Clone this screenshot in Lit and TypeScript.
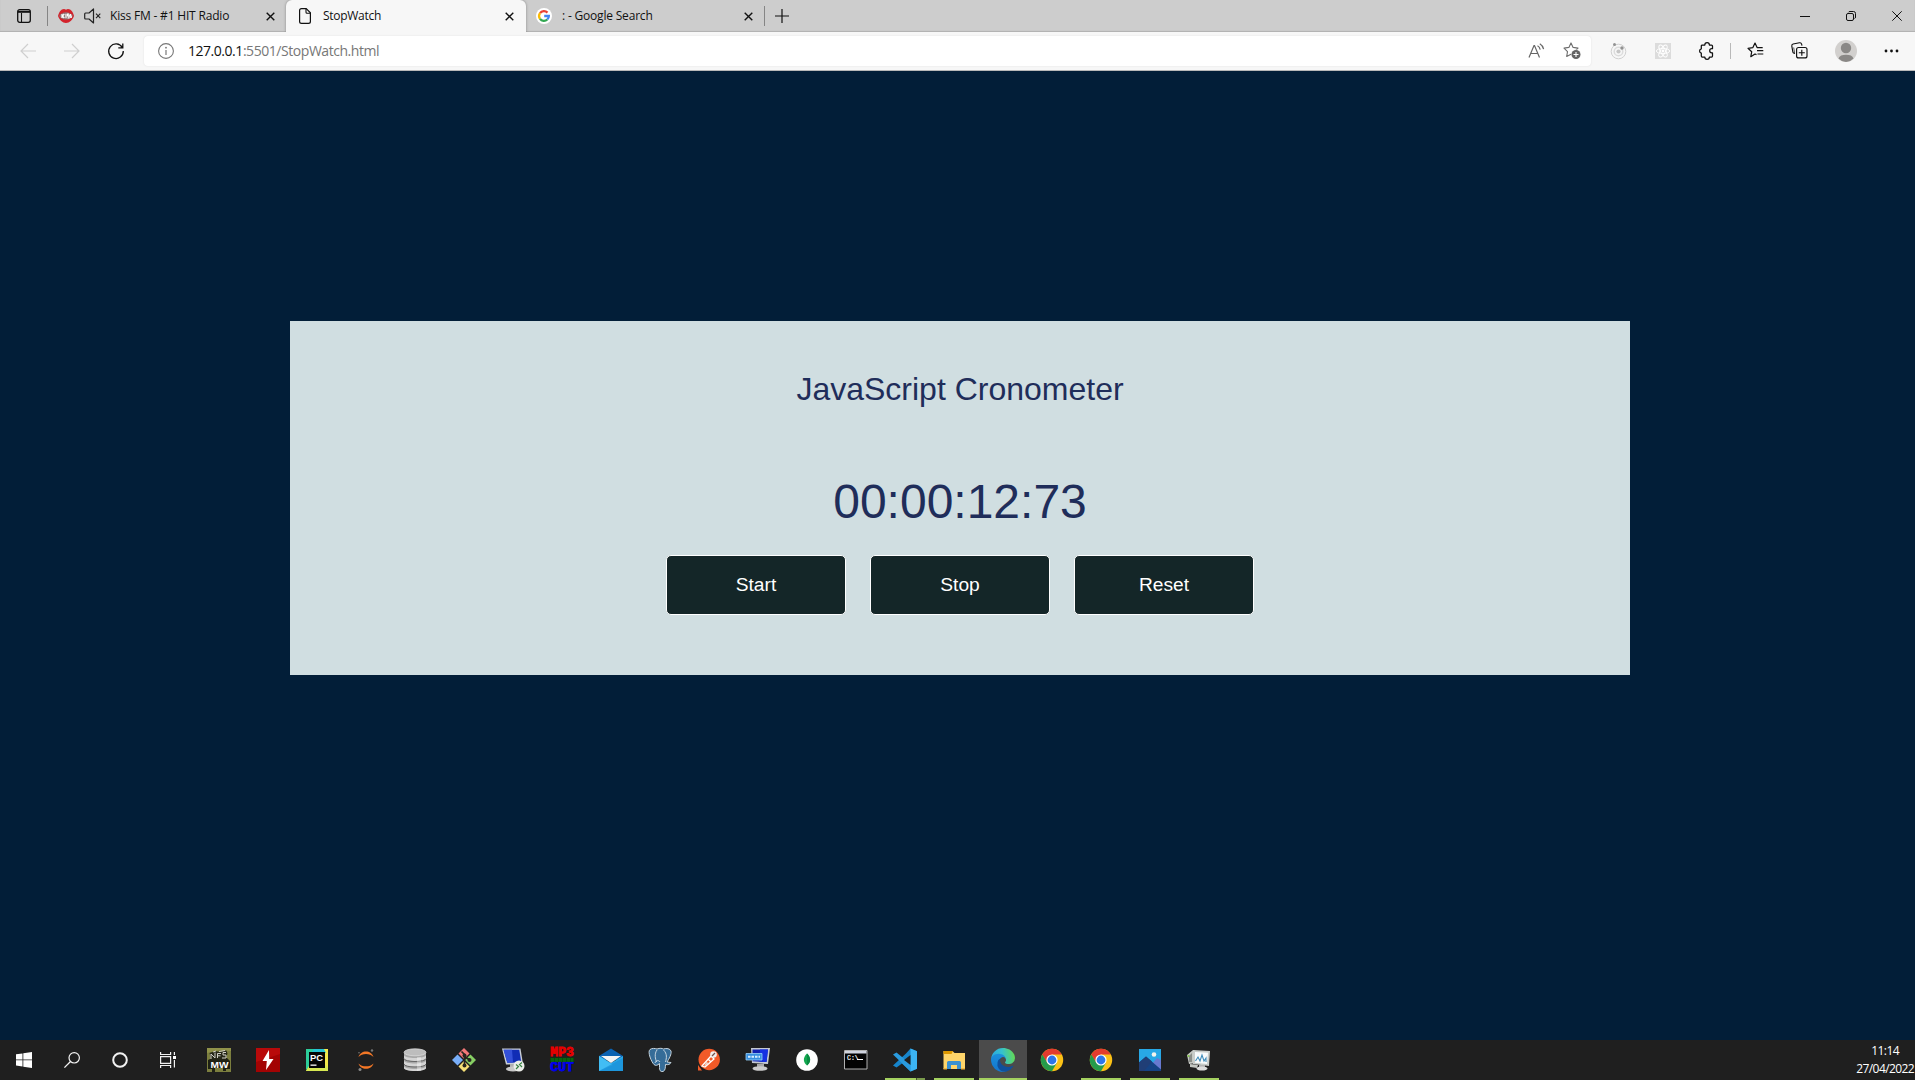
import { LitElement, html, css, svg, TemplateResult } from "lit";
import { customElement, property } from "lit/decorators.js";
import { classMap } from "lit/directives/class-map.js";

const icon = (w: number, h: number, body: TemplateResult) =>
  html`<svg width=${w} height=${h} viewBox="0 0 ${w} ${h}" fill="none" style="display:block;overflow:visible">${body}</svg>`;

const closeGlyph = icon(9, 9, svg`<path d="M.7.7l7.6 7.6M8.3.7L.7 8.3" stroke="#111" stroke-width="1.4"/>`);

const kissIcon = icon(16, 16, svg`
  <path d="M0 8C1 4 3 1 6 1q1 0 2 .8Q9 1 10 1c3 0 5 3 6 7-1.500 4-4.500 7-8 7S1.500 12 0 8z" fill="#d3222b"/>
  <path d="M1 8C3 5.500 5 4.300 8 4.300S13 5.500 15 8C13 10.600 11 11.600 8 11.600S3 10.600 1 8z" fill="#8f7376"/>
  <path d="M4 6v4M6.300 6L4.500 8l1.800 2M8 5.700v4.600M11 6.200H9.600v1.700H11V10H9.500M13.200 6.700h-1v1.300h1v1.400h-1" stroke="#fff" stroke-width="1.200"/>`);

const muteIcon = icon(17, 16, svg`
  <path d="M9.500 1v14L5 11H1.600A1 1 0 0 1 .7 10V6a1 1 0 0 1 .9-1H5z" stroke="#222" stroke-width="1.200" stroke-linejoin="round"/>
  <path d="M12 5.700l4.300 4.500M16.300 5.700L12 10.200" stroke="#222" stroke-width="1.100"/>`);

const docIcon = icon(12, 16, svg`
  <path d="M2.500.6h4.700l4.200 4.200v8.700a1.900 1.900 0 0 1-1.900 1.900h-7A1.900 1.900 0 0 1 .6 13.500v-11A1.900 1.900 0 0 1 2.500.6z" stroke="#111" stroke-width="1.200"/>
  <path d="M7 .8v3.400a1 1 0 0 0 1 1h3.300" stroke="#111" stroke-width="1.100"/>`);

const googleIcon = icon(16, 16, svg`
  <circle cx="8" cy="8" r="8" fill="#fff"/>
  <g stroke-width="2.300">
    <path d="M4 5.200A4.850 4.850 0 0 1 11.500 4.600" stroke="#ea4335"/>
    <path d="M4 10.800A4.850 4.850 0 0 1 4 5.200" stroke="#fbbc05"/>
    <path d="M11.300 11.500A4.850 4.850 0 0 1 4 10.800" stroke="#34a853"/>
    <path d="M8.200 8h4.650A4.850 4.850 0 0 1 11.300 11.500" stroke="#4285f4"/>
  </g>`);

const starPath = "M8 .9l2.100 4.500 4.900.7-3.500 3.500.8 4.900L8 12.200l-4.300 2.300.8-4.900L1 6.100l4.900-.7z";

const readAloud = icon(17, 16, svg`
  <path d="M1 14.500L6 2.500h.5l5 12M2.800 10.500h7" stroke="#666" stroke-width="1.200"/>
  <path d="M9.500 2.800q2.200 1 2.700 3.800M11.800.8q3 1.700 3.800 5.400" stroke="#666" stroke-width="1.200"/>`);

const addFavorite = icon(18, 18, svg`
  <path d=${starPath} stroke="#6d6d6d" stroke-width="1.100" stroke-linejoin="round"/>
  <circle cx="13" cy="12.500" r="5" fill="#f9f9f9"/><circle cx="13" cy="12.500" r="4.500" fill="#646464"/>
  <path d="M13 10v5M10.500 12.500h5" stroke="#fff" stroke-width="1.100"/>`);

const orbitIcon = icon(17, 18, svg`
  <circle cx="8.500" cy="9.500" r="7.300" stroke="#d0d0d0"/><circle cx="8.500" cy="9.500" r="4.300" stroke="#dcdcdc" stroke-width="1.500"/>
  <circle cx="8.500" cy="9.500" r="2.100" fill="#c6c6c6"/><circle cx="12" cy="6" r="1.700" fill="#929292"/><circle cx="4.500" cy="2.500" r="1.500" fill="#929292"/>`);

const reactIcon = icon(16, 16, svg`
  <path d="M0 0h16v16H0z" fill="#dcdcdc"/>
  <g stroke="#fff" stroke-width=".9"><ellipse cx="8" cy="8" rx="6.700" ry="2.600"/>
  <ellipse cx="8" cy="8" rx="6.700" ry="2.600" transform="rotate(60 8 8)"/>
  <ellipse cx="8" cy="8" rx="6.700" ry="2.600" transform="rotate(120 8 8)"/></g><circle cx="8" cy="8" r="1.400" fill="#fff"/>`);

const puzzleIcon = icon(16, 17, svg`
  <path transform="translate(1 0)" d="M3.300 3h2.500a2.300 2.300 0 0 1 4.600 0h2.100a1 1 0 0 1 1 1v2.700h-.7a2 2 0 0 0 0 4.200h.7V14a1 1 0 0 1-1 1h-2.100a2.300 2.300 0 0 1-4.600 0H3.300a1 1 0 0 1-1-1v-2.900a2.200 2.200 0 0 1 0-4.300V4a1 1 0 0 1 1-1z" stroke="#111" stroke-width="1.250" stroke-linejoin="round"/>`);

const favoritesIcon = icon(17, 17, svg`
  <path d="M9.500 12.600L8 12l-4.200 2.700.9-4.900L1 6.300l4.900-.7L8 1l2.100 4.600h5.600" stroke="#111" stroke-width="1.200" stroke-linejoin="round"/>
  <path d="M10 8.700h6.300M10.500 12h5.800" stroke="#111" stroke-width="1.200"/>`);

const collectionsIcon = icon(17, 17, svg`
  <path d="M4 11.500l-1-.3a1.800 1.800 0 0 1-1.200-1.600L.8 4.100A1.800 1.800 0 0 1 2.100 2L8.500.8a1.800 1.800 0 0 1 2.100 1.300l.4 1.600" stroke="#111" stroke-width="1.150"/>
  <path d="M3.600 11L2.700 5.500" stroke="#111" stroke-width=".7"/>
  <rect x="5.600" y="5.500" width="10.400" height="10.400" rx="2" stroke="#111" stroke-width="1.150"/>
  <path d="M10.800 7.700v6M7.800 10.700h6" stroke="#111" stroke-width="1.150"/>`);

const profileIcon = icon(22, 22, svg`
  <circle cx="11" cy="11" r="11" fill="#d2d0ce"/><circle cx="11" cy="8" r="5.200" fill="#8a8886"/>
  <path d="M3.500 18.500C4.500 15.500 7 14.700 11 14.700s6.500.8 7.500 3.800A11 11 0 0 1 11 22a11 11 0 0 1-7.500-3.500z" fill="#8a8886"/>`);

const chromeArt = svg`
  <circle cx="12" cy="12" r="11.200" fill="#fbc116"/>
  <path d="M12 12L2.300 6.400A11.200 11.200 0 0 1 21.700 6.400H12z" fill="#e33b2e"/>
  <path d="M2.300 6.400A11.200 11.200 0 0 0 12 23.200L16.900 14.800 12 17 7.200 14.800z" fill="#259b4a"/>
  <path d="M2.300 6.400l4.900 8.400L12 12V6.400z" fill="#e33b2e"/>
  <path d="M2.300 6.400l4.900 8.400L9 17l-6-3z" fill="#259b4a"/>
  <circle cx="12" cy="12" r="5.600" fill="#fff"/><circle cx="12" cy="12" r="4.400" fill="#2d75e8"/>`;

const edgeArt = svg`
  <defs>
    <linearGradient id="wave" x1="0" y1="120" x2="250" y2="80" gradientUnits="userSpaceOnUse"><stop offset="0" stop-color="#2aa5df"/><stop offset=".5" stop-color="#35c1cf"/><stop offset="1" stop-color="#62d957"/></linearGradient>
    <linearGradient id="body" x1="100" y1="80" x2="70" y2="240" gradientUnits="userSpaceOnUse"><stop offset="0" stop-color="#1b8edb"/><stop offset="1" stop-color="#1478cf"/></linearGradient>
  </defs>
  <g transform="scale(.09375)">
    <path d="M231 190.500c-3.400 1.800-6.900 3.400-10.500 4.700a101.500 101.500 0 0 1-35.900 6.500c-47.300 0-88.500-32.500-88.500-74.300a31.500 31.500 0 0 1 16.400-27.300c-42.800 1.800-53.800 46.400-53.800 72.500 0 73.900 68.100 81.400 82.800 81.400 7.900 0 19.800-2.300 27-4.600l1.300-.4a128.300 128.300 0 0 0 66.600-52.800 4 4 0 0 0-5.400-5.700z" fill="#10509c"/>
    <path d="M105.700 241.400a79.200 79.200 0 0 1-22.700-21.300 80.700 80.700 0 0 1 29.500-120c3.200-1.500 8.500-4.100 15.600-4a32.400 32.400 0 0 1 25.700 13 31.900 31.900 0 0 1 6.300 18.700c0-.2 24.500-79.600-80-79.600-43.900 0-80 41.700-80 78.200a130.200 130.200 0 0 0 12.100 56 128 128 0 0 0 156.400 67 75.500 75.500 0 0 1-62.800-8z" fill="url(#body)"/>
    <path d="M152.300 148.900c-.9 1-3.400 2.500-3.400 5.600 0 2.600 1.700 5.200 4.800 7.300 14.300 10 41.400 8.600 41.500 8.600a59.600 59.600 0 0 0 30.300-8.300 61.400 61.400 0 0 0 30.400-52.900c.3-22.400-8-37.300-11.300-43.900C223.500 23.900 177.700 0 128 0A128 128 0 0 0 0 126.200c.5-36.500 36.800-66 80-66 3.500 0 23.500.3 42 10.100 16.300 8.600 24.900 18.900 30.800 29.200 6.200 10.700 7.300 24.100 7.300 29.500 0 5.300-2.700 13.300-7.800 19.900z" fill="url(#wave)"/>
  </g>`;

interface App { art: TemplateResult; state?: "open" | "active" | "multi"; }

const apps: App[] = [
  { art: svg`
    <path d="M0 0h24v24H0z" fill="#7b7e3e"/><path d="M0 0h24v3L13 2 0 5z" fill="#90924a"/><path d="M1 12l4-2h15l3 3v8h-4v2h-3v-3H8v4H5v-3H1z" fill="#1f2114"/>
    <path d="M2.500 5l6-2 4 1 7-1.500 1 3-2 6H4z" fill="#26281a"/>
    <path d="M4 11V6l4 4V4.500M10.500 10V5.500h3.500M10.500 7.800h3M19 4.500h-3v2.500h3V10h-4M6 4l3-1M12 3.500l6-1" stroke="#cfcfc6" stroke-width="1"/>
    <text x="3.500" y="20" font-family="Liberation Sans, sans-serif" font-weight="700" font-size="9.500" textLength="18" lengthAdjust="spacingAndGlyphs" fill="#fff">MW</text>` },
  { art: svg`<path d="M0 0h24v24H0z" fill="#b90a0a"/><path d="M0 14l24-8v18H0z" fill="#a30303"/><path d="M13 2L6.500 13h4.300L10 22l7.500-11h-4.300z" fill="#fff"/>` },
  { art: svg`<path d="M1 1h11L9 13 1 22z" fill="#21d789"/><path d="M12 1h11l-1 8-8 2z" fill="#1bc0e8"/><path d="M19 1h4v22l-8-4z" fill="#f2e84a"/><path d="M1 1h8v20H1z" fill="#2dcd9a"/><path d="M9 1h10l2 4H6z" fill="#24c3d4"/><path d="M1 22.500l4-6 16 1 2 2v3.500H1z" fill="#d7e852"/>
    <path d="M4 4h16v16H4z" fill="#050505"/><text x="5" y="13.200" font-family="Liberation Sans, sans-serif" font-weight="700" font-size="9.500" fill="#fff" textLength="13" lengthAdjust="spacingAndGlyphs">PC</text><path d="M5.500 16.500h6v1.300h-6z" fill="#fff"/>` },
  { art: svg`<path d="M4.500 9C6.500 1.500 17.500 1.500 19.500 9 16 5 8 5 4.500 9zM4.500 15.500C6.500 22.500 17.500 22.500 19.500 15.500 16 19.300 8 19.300 4.500 15.500z" fill="#f37726"/><circle cx="18" cy="2.500" r="1.200" fill="#777"/><circle cx="6" cy="21.500" r="1.500" fill="#898989"/><circle cx="5" cy="4.700" r=".8" fill="#777"/>` },
  { art: svg`<path d="M1 4.500v15C1 24 23 24 23 19.500v-15" fill="#a8a8a8"/><path d="M1 7v3c0 4 22 4 22 0V7c0 4-22 4-22 0zM1 12.500v3c0 4 22 4 22 0v-3c0 4-22 4-22 0zM1 18v2c0 4 22 4 22 0v-2c0 4-22 4-22 0z" fill="#d4d4d4"/><path d="M1 10.500c0 4 22 4 22 0M1 16c0 4 22 4 22 0" stroke="#666"/><path d="M14 9h4v14h-4z" fill="#fff" opacity=".35"/><ellipse cx="12" cy="4.300" rx="11" ry="3.500" fill="#bdbdbd" stroke="#e0e0e0" stroke-width=".7"/>` },
  { art: svg`<path d="M12 0l5.500 5.500L12 11 6.500 5.500z" fill="#f37878"/><path d="M5.500 6.500L11 12l-5.500 5.500L0 12z" fill="#79aef8"/><path d="M18.500 6.500L24 12l-5.500 5.500L13 12z" fill="#87cf64"/><path d="M12 13l5.500 5.500L12 24l-5.500-5.500z" fill="#f6df76"/><path d="M9.500 3.500l3 3v11M13 9l5 3" stroke="#27251f" stroke-width="1.700"/><circle cx="12.500" cy="7.500" r="2" fill="#27251f"/><circle cx="12.500" cy="17.500" r="2" fill="#27251f"/><circle cx="17.500" cy="12" r="2" fill="#27251f"/>` },
  { art: svg`<path d="M1 .5l18.500 0 2.500 15.500-17 .500z" fill="#c8ced8"/><path d="M2.600 1.700h15.700l2 12.700-14 .300z" fill="#102cb5"/><path d="M2.600 1.700H11L12 14.500l-5.700.2z" fill="#3350d8"/><path d="M9 16h8v4H9z" fill="#b0b0b0"/><ellipse cx="12" cy="21" rx="7" ry="2.500" fill="#c8c8c8"/><circle cx="18" cy="18" r="5.500" fill="#eceee9"/><path d="M15 16.500l2.500 2-2.500 2.500M21 14.500l-2.500 2 2.500 2.500" stroke="#388344" stroke-width="1.200"/>` },
  { art: svg`<g font-family="Liberation Mono, monospace" font-weight="700" font-size="12"><text x=".3" y="8.300" fill="#e80000" stroke="#e80000" stroke-width=".8" textLength="23.500" lengthAdjust="spacingAndGlyphs">MP3</text><text x=".3" y="23" fill="#0000ee" stroke="#0000ee" stroke-width=".8" textLength="23.500" lengthAdjust="spacingAndGlyphs">CUT</text></g><path d="M0 9.800h24v4H0z" fill="#064f09"/><path d="M1 11h22M1 13h22" stroke="#168b1c" stroke-width=".7" stroke-dasharray="3 1"/>` },
  { art: svg`<path d="M0 8L12 .5 24 8v4H0z" fill="#0b62b2"/><path d="M0 8l12 7 12-7v15H0z" fill="#29a8e8"/><path d="M0 8l14 9-14 6z" fill="#42bdf4"/><path d="M24 10v13H0z" fill="#168bd4" opacity=".6"/><path d="M2 8h20L12 15z" fill="#f4f4f4"/>` },
  { art: svg`<path d="M2 1.500C4 0 7 .3 9 1c3-1 5-.8 6.500 0 3-1 6.500-.5 7.500 2 .8 3-2 8-4 11l4 .5c-1 2-3 2.500-5.500 2-.2 3 0 6-2.500 7-3 .5-3.500-1.500-3.500-4v-4c-2 2-4 2.500-5.500 1C3.500 14-.8 4 2 1.500z" fill="#356c98" stroke="#c5d3dd" stroke-width="1"/><path d="M9 2C6 6 7.500 11 8.500 14M15.500 2c4 4 3 8 2 12M7 15c1-3 4-3 5-1" stroke="#d5dfe6" stroke-width=".9"/>` },
  { art: svg`<circle cx="12.200" cy="11.500" r="10.700" fill="#f15a28"/><path d="M1 17v5.500h4z" fill="#f15a28"/><path d="M5 18L14 8l3 3-9 8zM11 11l3 3" stroke="#fff" stroke-width="1.300"/><circle cx="16.500" cy="6.500" r="3.300" fill="#eee"/><path d="M15 8l3-3" stroke="#775047" stroke-width="1.300"/><path d="M9 14l3 1-5 4" fill="#efd2c8"/>` },
  { art: svg`<path d="M5 0h19l-2 16-16-1z" fill="#c6cad2"/><path d="M6.500 1.500h15.500l-1.500 12.500-14-.7z" fill="#1020b0"/><path d="M14 1.500h8l-1.500 12.500-7-.500z" fill="#1531e2"/><path d="M0 5.500h16v6.500H0z" fill="#388fe0" stroke="#98cff9" stroke-width=".8"/><path d="M2 8.700h12" stroke="#d8efff" stroke-width="2" stroke-dasharray="2.500 1"/><path d="M11 16h7v4h-7z" fill="#aaa"/><ellipse cx="14" cy="20.500" rx="7.500" ry="2.300" fill="#ccc"/>` },
  { art: svg`<circle cx="12" cy="12" r="10.800" fill="#fff"/><path d="M12 5.500c4.500 4 3.800 9 0 12-3.800-3-4.500-8 0-12z" fill="#13a94f"/><path d="M12 5.500c4.500 4 3.800 9 0 12z" fill="#0a8b43"/>` },
  { art: svg`<path d="M.5 2.500h22.500v18.500H.5z" fill="#030303" stroke="#b1b1b1"/><path d="M1 3h21.500v2.500H1z" fill="#d0d4df"/><text x="3" y="12" font-family="Liberation Mono, monospace" font-size="6.500" fill="#fff" stroke="#fff" stroke-width=".2">C:\\</text><path d="M13 11.500h6" stroke="#fff"/>` },
  { art: svg`<path d="M17.500.5L24 3.200v17.600l-6.500 2.700L9 15.500l-5.500 4L0 17.500 13 5.500z" fill="#1785cb"/><path d="M0 6.500l3.500-2L17.500 16v7.500z" fill="#2a9bdf"/><path d="M17.500.5L24 3.200v17.600l-6.500 2.700z" fill="#3cb4f3"/><path d="M17.500 7L11 12l6.500 5z" fill="#1f1f1f"/><path d="M0 9.500L2.800 12 0 14.500z" fill="#1f1f1f"/>`, state: "multi" },
  { art: svg`<path d="M1.500 3h9l2 2H23v16H1.500z" fill="#ffd56a"/><path d="M1.500 3h9.500l-1.500 3h-8z" fill="#de9800"/><path d="M5 14.500a1.500 1.500 0 0 1 1.500-1.500h11a1.500 1.500 0 0 1 1.500 1.500V21h-4v-4H9v4H5z" fill="#3a91d2"/><path d="M1.500 20h3.500v1.500H1.500zM19 20h4v1.500h-4z" fill="#f3b73d"/>`, state: "open" },
  { art: edgeArt, state: "active" },
  { art: chromeArt },
  { art: chromeArt, state: "open" },
  { art: svg`<path d="M1 1h22v22H1z" fill="#28a8e6"/><path d="M23 12l-4-2-6 7 10 6z" fill="#6879cf"/><path d="M1 14.500L8 8.500l15 13V23H1z" fill="#164384"/><path d="M1 14.500L8 8.500l6 5L6 23H1z" fill="#203e76"/><circle cx="16" cy="6.500" r="2.300" fill="#f4f5ed"/>`, state: "open" },
  { art: svg`<path d="M0 7l6-5 3 1v12l-7 1zM3 16l8 1-1 3-7-1z" fill="#c5c8c3"/><path d="M2 8l3-3v9H2z" fill="#8b8f8a"/><circle cx="1.500" cy="8" r="1" fill="#80c840"/><path d="M6 2l17 1-1 15-16-2z" fill="#c9cdca"/><path d="M8 4l13 .7-1 11.300-12-1.200z" fill="#f8fbfc"/><path d="M8.500 13l2.500-4 2 4 2-6 2 6 2-3v4" stroke="#408dba" stroke-width="1.100"/><path d="M12 17h6v3h-6z" fill="#b5b5b5"/><ellipse cx="15" cy="20.500" rx="5.500" ry="2" fill="#ddd"/>`, state: "open" },
];

@customElement("browser-tab")
class BrowserTab extends LitElement {
  @property({ type: Boolean, reflect: true }) active = false;
  @property() label = "";
  @property({ attribute: false }) icons: TemplateResult[] = [];

  static styles = css`
    :host { display: flex; align-items: center; box-sizing: border-box; height: 32px; color: #111;
      font: 12px/26px "Open Sans", sans-serif; letter-spacing: -0.19px; }
    :host([active]) { background: #f7f7f7; border-radius: 6px 6px 0 0; box-shadow: 0 0 3px rgba(0,0,0,.35); clip-path: inset(0 -4px 0 -4px); letter-spacing: -0.28px; }
    .icons { display: flex; gap: 10px; }
    .label { flex: 1; white-space: nowrap; }
    .tab { display: flex; align-items: center; flex: 1; gap: var(--label-gap, 10px); padding-left: var(--lead, 10px); padding-right: var(--tail, 12px); }
  `;

  render() {
    return html`<div class="tab"><div class="icons">${this.icons}</div><span class="label">${this.label}</span>${closeGlyph}</div>`;
  }
}

@customElement("browser-chrome")
class BrowserChrome extends LitElement {
  static styles = css`
    :host { display: block; flex: none; font-family: "Open Sans", sans-serif; }
    .strip { display: flex; align-items: center; height: 32px; background: #cdcdcd; box-shadow: inset 0 -1px 1px rgba(0,0,0,.14); }
    .workspace { padding: 0 16px 0 17px; }
    .rule { width: 1px; height: 20px; background: #858585; }
    .first { width: 238px; --lead: 10px; --tail: 11px; --label-gap: 9px; }
    .second { width: 240px; --lead: 13px; --tail: 12px; --label-gap: 12px; }
    .third { width: 238px; --lead: 10px; --tail: 11px; --label-gap: 10px; }
    .plus { margin-left: 10px; }
    .controls { display: flex; align-items: center; margin-left: auto; padding-right: 13px; gap: 36px; }
    .toolbar { display: flex; align-items: center; box-sizing: border-box; height: 39px; padding: 0 16px 1px 20px; background: #f7f7f7; border-bottom: 1px solid #b9b9b9; }
    .nav { display: flex; gap: 28px; width: 124px; }
    .address { display: flex; align-items: center; box-sizing: border-box; width: 1448px; height: 30px; padding: 0 10px 0 14px; background: #fff; border-radius: 4px; box-shadow: 0 0 2px rgba(0,0,0,.1); }
    .url { flex: 1; margin-left: 14px; font-size: 14px; line-height: 28px; letter-spacing: -0.45px; color: #777; }
    .url b { font-weight: 400; color: #111; }
    .page-actions { display: flex; align-items: center; gap: 18px; }
    .extensions { display: flex; align-items: center; gap: 27.500px; margin-left: 19.500px; }
    .divider { width: 1px; height: 16px; margin: 0 16px; background: #b9b9b9; }
    .personal { display: flex; align-items: center; gap: 27px; }
  `;

  render() {
    return html`
      <div class="strip">
        <div class="workspace">${icon(14, 14, svg`<rect x=".7" y=".7" width="12.600" height="12.600" rx="2" stroke="#111" stroke-width="1.300"/><path d="M1 1.800h12v2H1z" fill="#111"/><path d="M4.500 4v9" stroke="#111" stroke-width="1.100"/>`)}</div>
        <i class="rule"></i>
        <browser-tab class="first" label="Kiss FM - #1 HIT Radio" .icons=${[kissIcon, muteIcon]}></browser-tab>
        <browser-tab class="second" active label="StopWatch" .icons=${[docIcon]}></browser-tab>
        <browser-tab class="third" label=" : - Google Search" .icons=${[googleIcon]}></browser-tab>
        <i class="rule"></i>
        <div class="plus">${icon(14, 14, svg`<path d="M7 0v14M0 7h14" stroke="#111" stroke-width="1.200"/>`)}</div>
        <div class="controls">
          ${icon(10, 10, svg`<path d="M0 5.500h10" stroke="#111"/>`)}
          ${icon(10, 10, svg`<rect x=".5" y="2.500" width="7" height="7" rx="1.500" stroke="#111"/><path d="M2.500 1.300Q2.700.5 4 .5h3.500a2 2 0 0 1 2 2V6q0 1.300-1 1.500" stroke="#111"/>`)}
          ${icon(10, 10, svg`<path d="M.3.300l9.400 9.400M9.700.300L.3 9.700" stroke="#111"/>`)}
        </div>
      </div>
      <div class="toolbar">
        <div class="nav">
          ${icon(16, 16, svg`<path d="M16 8H1M8 1L1 8l7 7" stroke="#cfcfcf" stroke-width="1.200"/>`)}
          ${icon(16, 16, svg`<path d="M0 8h15M8 1l7 7-7 7" stroke="#cfcfcf" stroke-width="1.200"/>`)}
          ${icon(16, 16, svg`<path d="M14.300 4.500A7.300 7.300 0 1 0 15.300 8M14.800.5v4.300h-4.500" stroke="#111" stroke-width="1.300"/>`)}
        </div>
        <div class="address">
          ${icon(16, 16, svg`<circle cx="8" cy="8" r="7.400" stroke="#777" stroke-width="1.100"/><path d="M8 7v5" stroke="#777" stroke-width="1.200"/><circle cx="8" cy="4.700" r=".9" fill="#777"/>`)}
          <span class="url"><b>127.0.0.1</b>:5501/StopWatch.html</span>
          <div class="page-actions">${readAloud}${addFavorite}</div>
        </div>
        <div class="extensions">${orbitIcon}${reactIcon}${puzzleIcon}</div>
        <i class="divider"></i>
        <div class="personal">
          ${favoritesIcon}${collectionsIcon}${profileIcon}
          ${icon(15, 4, svg`<circle cx="2" cy="2" r="1.400" fill="#111"/><circle cx="7.500" cy="2" r="1.400" fill="#111"/><circle cx="13" cy="2" r="1.400" fill="#111"/>`)}
        </div>
      </div>`;
  }
}

@customElement("stop-watch")
class StopWatch extends LitElement {
  @property() time = "00:00:12:73";

  static styles = css`
    :host { display: flex; flex: 1; align-items: flex-start; box-sizing: border-box; padding: 250px 0 0 290px; background: #021e38; font-family: "Liberation Sans", sans-serif; }
    .panel { display: flex; flex-direction: column; align-items: center; box-sizing: border-box; width: 1340px; height: 354px; padding-top: 50px; background: #d0dee1; color: #1f2d5a; }
    h1 { margin: 0; font-size: 32px; line-height: 36px; font-weight: 400; }
    .time { margin: 67px 0 26px; font-size: 48px; line-height: 55px; }
    .buttons { display: flex; gap: 24px; }
    button { box-sizing: border-box; width: 180px; height: 60px; padding: 0; border: 1px solid #fff; border-radius: 5px; background: #142628; color: #fff; font: 19.200px "Liberation Sans", sans-serif; }
  `;

  render() {
    return html`<section class="panel">
      <h1>JavaScript Cronometer</h1>
      <div class="time">${this.time}</div>
      <div class="buttons"><button>Start</button><button>Stop</button><button>Reset</button></div>
    </section>`;
  }
}

@customElement("task-bar")
class TaskBar extends LitElement {
  static styles = css`
    :host { display: flex; flex: none; height: 40px; background: #1f1f1f; }
    .system { display: flex; width: 195px; }
    .apps { display: flex; gap: 1px; }
    .cell { display: flex; align-items: center; justify-content: center; box-sizing: border-box; width: 48px; height: 40px; }
    .active { background: #4b4b4b; box-shadow: inset 0 -2px #a4d160; }
    .open, .multi { background: linear-gradient(#a4d160, #a4d160) 4px 38px / 40px 2px no-repeat; }
    .multi { background: linear-gradient(90deg, #a4d160 31px, #42542a 31px, #42542a 32px, #7a9b4c 32px) 4px 38px / 40px 2px no-repeat; }
    .clock { display: flex; flex-direction: column; margin-left: auto; padding: 2px 1px 0 0; text-align: center; color: #fff; font: 12px/18px "Open Sans", sans-serif; letter-spacing: -0.600px; white-space: nowrap; }
  `;

  render() {
    return html`
      <div class="system">
        <div class="cell">${icon(16, 16, svg`<path d="M0 2.300l6.500-.9v6.100H0zM7.300 1.300L16 0v7.500H7.300zM0 8.300h6.500v6.200L0 13.600zM7.300 8.300H16V16l-8.700-1.300z" fill="#fff"/>`)}</div>
        <div class="cell">${icon(16, 16, svg`<circle cx="10.200" cy="5.800" r="5.200" stroke="#f4f4f4" stroke-width="1.200"/><path d="M6.500 9.500L.4 15.600" stroke="#f4f4f4" stroke-width="1.300"/>`)}</div>
        <div class="cell">${icon(16, 16, svg`<circle cx="8" cy="8" r="6.800" stroke="#f2f2f2" stroke-width="2"/>`)}</div>
        <div class="cell">${icon(16, 16, svg`<path d="M.6 0v2.500h10V0M.6 4.600h10v6.800H.6zM.6 16v-2.500h10V16M14.400 0v3M14.400 8v7.500" stroke="#f2f2f2" stroke-width="1.200"/><path d="M13 4h3v3h-3z" fill="#fff"/>`)}</div>
      </div>
      <div class="apps">
        ${apps.map((app) => html`<div class=${classMap({ cell: true, open: app.state === "open", active: app.state === "active", multi: app.state === "multi" })}>${icon(24, 24, app.art)}</div>`)}
      </div>
      <div class="clock"><span>11:14</span><span>27/04/2022</span></div>`;
  }
}

@customElement("app-root")
class AppRoot extends LitElement {
  static styles = css`
    :host { display: flex; flex-direction: column; width: 1915px; height: 1080px; overflow: hidden; }
  `;

  render() {
    return html`<browser-chrome></browser-chrome><stop-watch></stop-watch><task-bar></task-bar>`;
  }
}
